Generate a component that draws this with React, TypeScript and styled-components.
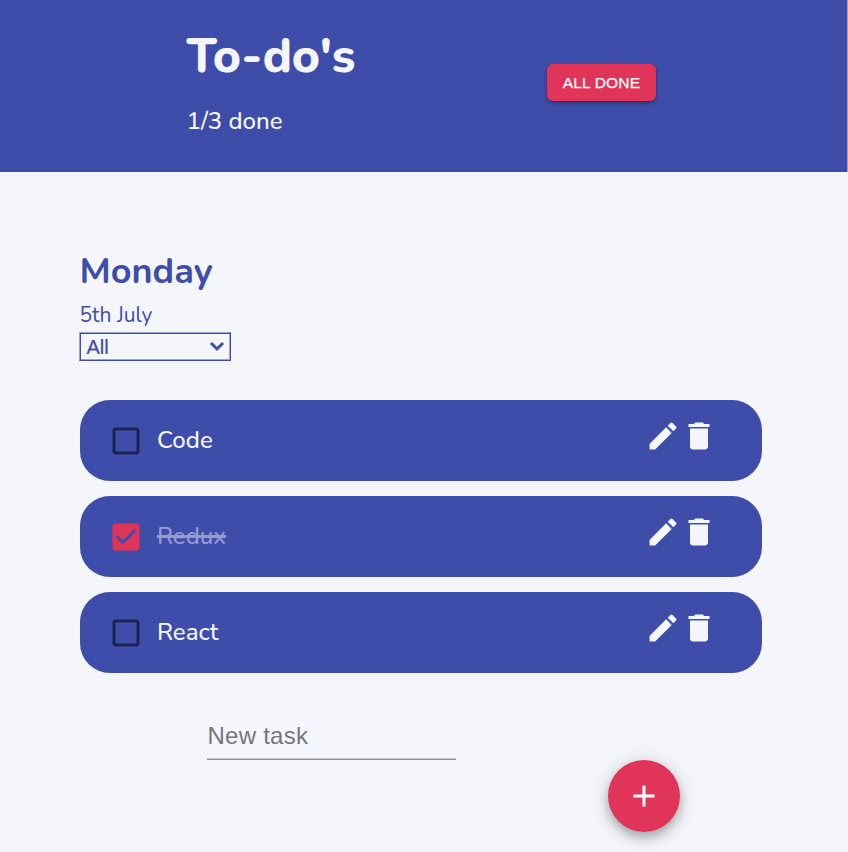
import React, { useState } from 'react';
import styled, { createGlobalStyle } from 'styled-components';

const blue = '#3e4da9';
const paper = '#f5f6fc';
const red = '#e13459';

const GlobalStyle = createGlobalStyle`
  *, *::before, *::after { box-sizing: border-box; }
  body { margin: 0; background: ${paper}; font-family: Nunito, Lato, sans-serif; }
  h1, h2, p, ul { margin: 0; padding: 0; }
  button { font: inherit; border: 0; padding: 0; cursor: pointer; }
`;

const Page = styled.div`
  width: 848px;
  height: 852px;
  overflow: hidden;
  color: ${blue};
`;

const Header = styled.header`
  display: flex;
  justify-content: space-between;
  height: 172px;
  padding: 26px 191px 0 186.5px;
  border-right: 1px solid #9a9fd0;
  background: ${blue};
  color: ${paper};
`;

const Title = styled.h1`
  font-size: 48px;
  line-height: 60px;
  font-weight: 780;
  letter-spacing: -0.35px;
  white-space: nowrap;
`;

const Progress = styled.p`
  margin-top: 20px;
  font-size: 24px;
  line-height: 30px;
  font-weight: 550;
  white-space: nowrap;
`;

const DoneButton = styled.button`
  && {
    width: 109px;
    height: 37px;
    margin-top: 38px;
    border-radius: 6px;
    background: ${red};
    color: #fff;
    font: 500 15.5px/37px "Liberation Sans", Arial, sans-serif;
    letter-spacing: 0.15px;
    -webkit-text-stroke: 0.25px #fff;
    white-space: nowrap;
    box-shadow: 0 1px 3px rgba(0, 0, 0, 0.3), 0 3px 4px rgba(0, 0, 0, 0.16);
  }
`;

const Main = styled.main`
  padding: 77px 86px 0 79.5px;
`;

const Day = styled.h2`
  font-size: 36px;
  line-height: 46px;
  font-weight: 750;
  white-space: nowrap;
`;

const DateLine = styled.p`
  margin-top: 5px;
  font-size: 21px;
  line-height: 30px;
  font-weight: 450;
`;

const Filter = styled.button`
  && {
    display: flex;
    align-items: center;
    justify-content: space-between;
    width: 152px;
    height: 29px;
    margin: 2px 0 0 -0.5px;
    padding: 0 5px 0 6.5px;
    border: 1px solid #9aa2d3;
    border-bottom-color: ${blue};
    border-right-color: ${blue};
    box-shadow: inset 1px 1px 0 ${blue}, inset -1px -1px 0 #9aa2d3;
    background: transparent;
    color: ${blue};
    font: 20px/26px "Liberation Sans", Arial, sans-serif;
    -webkit-text-stroke: 0.2px ${blue};
  }
`;

const Tasks = styled.ul`
  display: flex;
  flex-direction: column;
  gap: 15px;
  margin-top: 39px;
  list-style: none;
`;

const Task = styled.li`
  display: flex;
  align-items: center;
  height: 81px;
  padding: 0 45px 1px 28.5px;
  border-radius: 30px;
  background: ${blue};
`;

const Check = styled.button<{ $checked: boolean }>`
  display: flex;
  padding-top: 1px;
  background: none;
  color: ${({ $checked }) => ($checked ? red : '#1b2352')};
`;

const Label = styled.span<{ $done: boolean }>`
  flex: 1;
  margin-left: 13px;
  font-size: 24px;
  line-height: 30px;
  font-weight: 550;
  color: ${({ $done }) => ($done ? '#949bd0' : paper)};
  text-decoration: ${({ $done }) => ($done ? 'line-through' : 'none')};
  text-decoration-thickness: 3px;
`;

const IconButton = styled.button`
  display: flex;
  margin-bottom: 8px;
  background: none;
  color: ${paper};
`;

const Glyph = styled.svg`
  display: block;
  width: 36px;
  height: 36px;
  fill: currentColor;
`;

const NewTask = styled.form`
  display: flex;
  align-items: flex-start;
  justify-content: space-between;
  padding: 42px 2px 0 127.5px;
  width: 602px;
`;

const Input = styled.input`
  width: 249px;
  height: 45px;
  padding: 0 0 3px 0.5px;
  border: 0;
  border-bottom: 1px solid #8b8c91;
  box-shadow: inset 0 -1px 0 #c3c4ca;
  outline: 0;
  background: transparent;
  color: #222;
  font: 24px "Liberation Sans", Arial, sans-serif;
  letter-spacing: 0.25px;
  &::placeholder { color: #757679; opacity: 1; }
`;

const AddButton = styled.button`
  display: flex;
  align-items: center;
  justify-content: center;
  flex: none;
  width: 72px;
  height: 72px;
  margin-top: 45px;
  border-radius: 50%;
  background: ${red};
  color: #fff;
  box-shadow: 0 4px 8px rgba(0, 0, 0, 0.18), 0 8px 14px rgba(0, 0, 0, 0.12), 0 2px 26px rgba(0, 0, 0, 0.12);
`;

const icons = {
  off: 'M19 5v14H5V5h14m0-2H5c-1.1 0-2 .9-2 2v14c0 1.1.9 2 2 2h14c1.1 0 2-.9 2-2V5c0-1.1-.9-2-2-2z',
  on: 'M19 3H5c-1.11 0-2 .9-2 2v14c0 1.1.89 2 2 2h14c1.11 0 2-.9 2-2V5c0-1.1-.89-2-2-2zm-9 14l-5-5 1.41-1.41L10 14.17l7.59-7.59L19 8l-9 9z',
  edit: 'M3 17.25V21h3.75L17.81 9.94l-3.75-3.75L3 17.25zM20.71 7.04c.39-.39.39-1.02 0-1.41l-2.34-2.34a.9959.9959 0 0 0-1.41 0l-1.83 1.83 3.75 3.75 1.83-1.83z',
  trash: 'M6 19c0 1.1.9 2 2 2h8c1.1 0 2-.9 2-2V7H6v12zM19 4h-3.5l-1-1h-5l-1 1H5v2h14V4z',
  plus: 'M19 13h-6v6h-2v-6H5v-2h6V5h2v6h6v2z',
};

const Icon = ({ name }: { name: keyof typeof icons }) => (
  <Glyph viewBox="0 0 24 24" aria-hidden="true">
    <path d={icons[name]} />
  </Glyph>
);

const ChevronIcon = () => (
  <svg width="16" height="12" viewBox="0 0 16 12" fill="none" stroke="currentColor" strokeWidth="3" aria-hidden="true">
    <path d="M2 2l6 6 6-6" />
  </svg>
);

export default function App() {
  const [tasks, setTasks] = useState([
    { name: 'Code', done: false },
    { name: 'Redux', done: true },
    { name: 'React', done: false },
  ]);
  const [draft, setDraft] = useState('');
  const toggle = (index: number) =>
    setTasks(tasks.map((t, i) => (i === index ? { ...t, done: !t.done } : t)));
  const add = (event: React.FormEvent) => {
    event.preventDefault();
    if (!draft.trim()) return;
    setTasks([...tasks, { name: draft.trim(), done: false }]);
    setDraft('');
  };

  return (
    <Page>
      <GlobalStyle />
      <Header>
        <div>
          <Title>To-do's</Title>
          <Progress>{`${tasks.filter((t) => t.done).length}/${tasks.length} done`}</Progress>
        </div>
        <DoneButton onClick={() => setTasks(tasks.map((t) => ({ ...t, done: true })))}>ALL DONE</DoneButton>
      </Header>
      <Main>
        <Day>Monday</Day>
        <DateLine>5th July</DateLine>
        <Filter>
          All
          <ChevronIcon />
        </Filter>
        <Tasks>
          {tasks.map((task, i) => (
            <Task key={i}>
              <Check $checked={task.done} onClick={() => toggle(i)} aria-label="Toggle task">
                <Icon name={task.done ? 'on' : 'off'} />
              </Check>
              <Label $done={task.done}>{task.name}</Label>
              <IconButton aria-label="Edit task"><Icon name="edit" /></IconButton>
              <IconButton aria-label="Delete task" onClick={() => setTasks(tasks.filter((_, n) => n !== i))}>
                <Icon name="trash" />
              </IconButton>
            </Task>
          ))}
        </Tasks>
        <NewTask onSubmit={add}>
          <Input placeholder="New task" value={draft} onChange={(e) => setDraft(e.target.value)} />
          <AddButton type="submit" aria-label="Add task"><Icon name="plus" /></AddButton>
        </NewTask>
      </Main>
    </Page>
  );
}
